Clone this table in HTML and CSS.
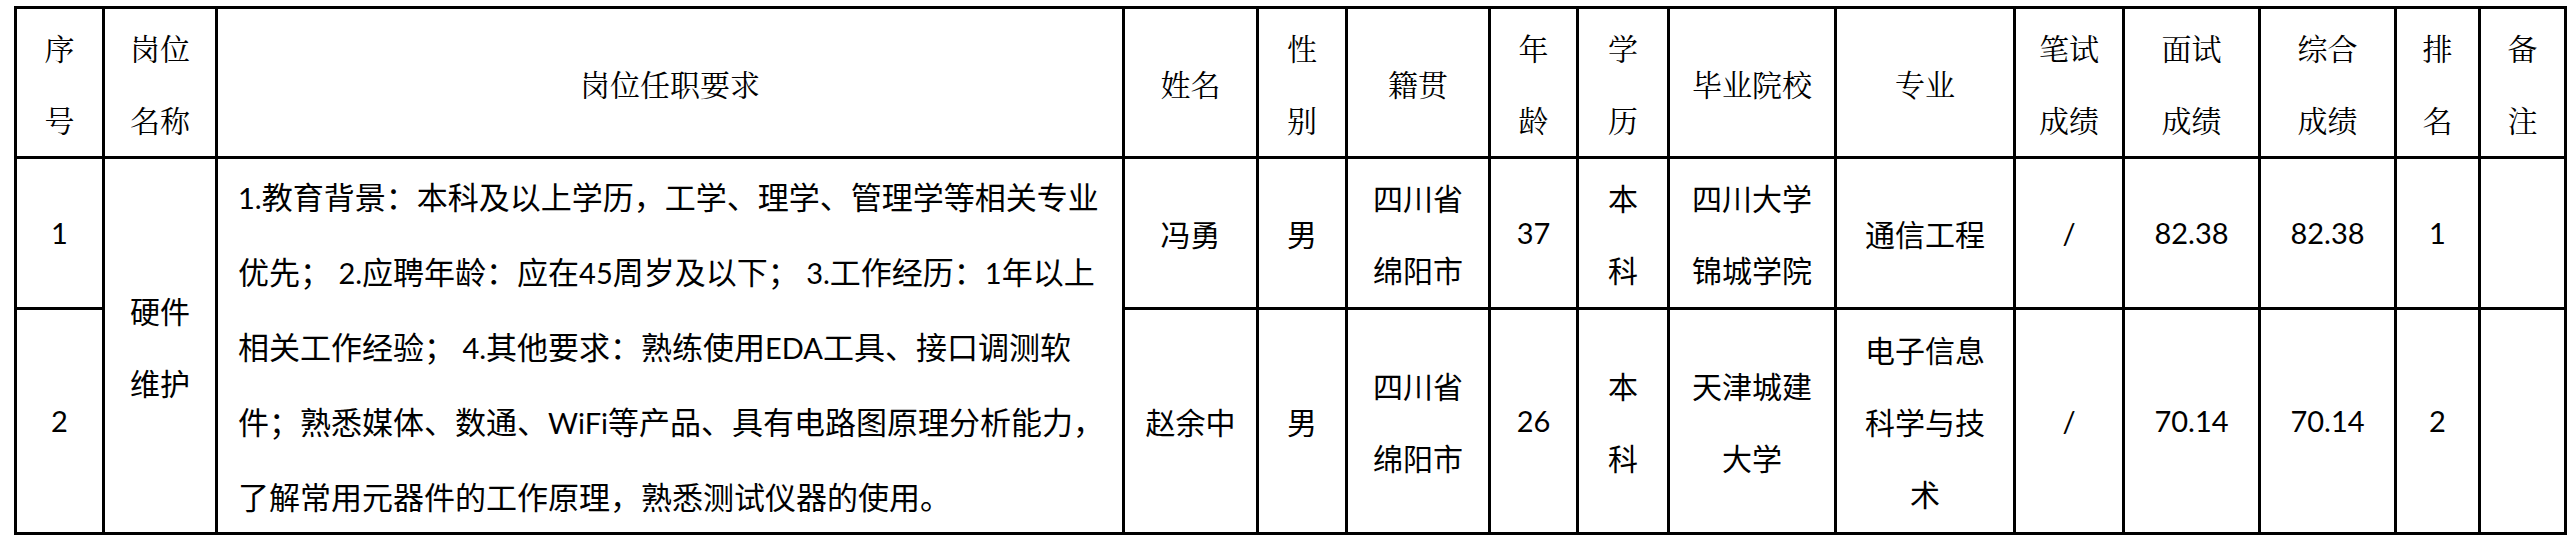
FILE: index.html
```html
<!DOCTYPE html>
<html lang="zh-CN">
<head>
<meta charset="utf-8">
<title>岗位</title>
<link rel="stylesheet" href="styles.css">
</head>
<body>
<table class="grid">
  <colgroup>
    <col class="w-no"><col class="w-post"><col class="w-req"><col class="w-name"><col class="w-sex">
    <col class="w-home"><col class="w-age"><col class="w-edu"><col class="w-school"><col class="w-major">
    <col class="w-written"><col class="w-interview"><col class="w-total"><col class="w-rank"><col class="w-note">
  </colgroup>
  <thead>
    <tr class="head">
      <th>序<br>号</th>
      <th>岗位<br>名称</th>
      <th>岗位任职要求</th>
      <th>姓名</th>
      <th>性<br>别</th>
      <th>籍贯</th>
      <th>年<br>龄</th>
      <th>学<br>历</th>
      <th>毕业院校</th>
      <th>专业</th>
      <th>笔试<br>成绩</th>
      <th>面试<br>成绩</th>
      <th>综合<br>成绩</th>
      <th>排<br>名</th>
      <th>备<br>注</th>
    </tr>
  </thead>
  <tbody>
    <tr class="row1">
      <td class="num">1</td>
      <td rowspan="2">硬件<br>维护</td>
      <td rowspan="2" class="req"><span class="lat">1.</span>教育背景：本科及以上学历，工学、理学、管理学等相关专业<br>优先；<span class="lat"> 2.</span>应聘年龄：应在<span class="lat">45</span>周岁及以下；<span class="lat"> 3.</span>工作经历：<span class="lat">1</span>年以上<br>相关工作经验；<span class="lat"> 4.</span>其他要求：熟练使用<span class="lat">EDA</span>工具、接口调测软<br>件；熟悉媒体、数通、<span class="lat">WiFi</span>等产品、具有电路图原理分析能力，<br>了解常用元器件的工作原理，熟悉测试仪器的使用。</td>
      <td>冯勇</td>
      <td>男</td>
      <td>四川省<br>绵阳市</td>
      <td class="num">37</td>
      <td>本<br>科</td>
      <td>四川大学<br>锦城学院</td>
      <td>通信工程</td>
      <td class="num">/</td>
      <td class="num">82.38</td>
      <td class="num">82.38</td>
      <td class="num">1</td>
      <td></td>
    </tr>
    <tr class="row2">
      <td class="num">2</td>
      <td>赵余中</td>
      <td>男</td>
      <td>四川省<br>绵阳市</td>
      <td class="num">26</td>
      <td>本<br>科</td>
      <td>天津城建<br>大学</td>
      <td>电子信息<br>科学与技<br>术</td>
      <td class="num">/</td>
      <td class="num">70.14</td>
      <td class="num">70.14</td>
      <td class="num">2</td>
      <td></td>
    </tr>
  </tbody>
</table>
</body>
</html>
```

FILE: styles.css
```css
html, body {
  margin: 0;
  padding: 0;
  background: #ffffff;
}

body {
  font-family: "Noto Sans CJK SC", sans-serif;
  color: #000000;
}

.grid {
  margin: 6px 0 0 14px;
  border-collapse: collapse;
  table-layout: fixed;
  width: 2552px;
}

.w-no { width: 88px; }
.w-post { width: 113px; }
.w-req { width: 907px; }
.w-name { width: 134px; }
.w-sex { width: 89px; }
.w-home { width: 143px; }
.w-age { width: 88px; }
.w-edu { width: 91px; }
.w-school { width: 167px; }
.w-major { width: 179px; }
.w-written { width: 109px; }
.w-interview { width: 136px; }
.w-total { width: 136px; }
.w-rank { width: 84px; }
.w-note { width: 86px; }

.grid th,
.grid td {
  border: 3px solid #000000;
  padding: 0;
  text-align: center;
  vertical-align: middle;
  font-size: 30px;
  line-height: 72px;
  font-weight: 400;
  white-space: nowrap;
}

.grid th {
  font-family: "Noto Serif CJK SC", "Noto Sans CJK SC", serif;
}

.head { height: 150px; }
.row1 { height: 150px; }
.row2 { height: 224px; }

.grid td.req {
  text-align: left;
  padding-left: 20px;
  font-size: 31px;
  line-height: 73px;
}

.num,
.lat {
  font-family: "Lato", "Noto Sans CJK SC", sans-serif;
}

.lat {
  font-size: 29px;
  white-space: pre;
}

.grid td.num {
  font-size: 29px;
}
```
